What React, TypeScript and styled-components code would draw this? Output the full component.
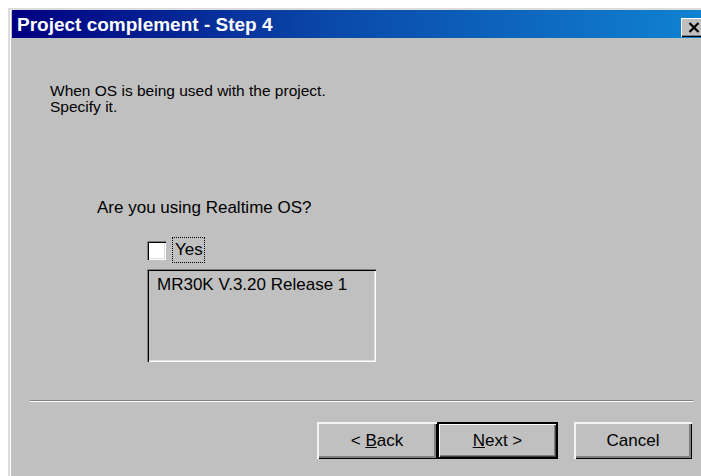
import React from "react";
import styled, { createGlobalStyle } from "styled-components";

const Global = createGlobalStyle`
  html, body {
    margin: 0;
    padding: 0;
    background: #ffffff;
    overflow: hidden;
  }
  body {
    width: 701px;
    height: 476px;
    font-family: "Liberation Sans", Arial, sans-serif;
  }
`;

const Window = styled.div`
  box-sizing: border-box;
  margin: 8px 0 0 8px;
  width: 703px;
  height: 480px;
  border-top: 2px solid #dcdcdc;
  border-left: 2px solid #dcdcdc;
  padding-left: 2px;
  background: #c0c0c0;
  box-shadow: inset 1px 1px #ffffff;
  display: flex;
  flex-direction: column;
`;

const TitleBar = styled.div`
  height: 28px;
  flex: 0 0 28px;
  display: flex;
  align-items: center;
  justify-content: space-between;
  padding: 0 4px 0 5px;
  background: linear-gradient(90deg, #000080 0%, #0a48a8 45%, #1084d0 100%);
`;

const TitleText = styled.span`
  color: #ffffff;
  font-weight: bold;
  font-size: 19px;
  padding-top: 2px;
`;

const CloseButton = styled.div`
  width: 26px;
  height: 19px;
  margin-top: 6px;
  background: #c0c0c0;
  box-sizing: border-box;
  display: flex;
  align-items: center;
  justify-content: center;
  box-shadow: inset 1px 1px #ffffff, inset -1px -1px #000000, inset -2px -2px #808080;
`;

const Content = styled.div`
  flex: 1;
  display: flex;
  flex-direction: column;
  align-items: flex-start;
  font-size: 17px;
  color: #000000;
`;

const Intro = styled.p`
  margin: 45px 0 0 38px;
  font-size: 15.5px;
  line-height: 16px;
`;

const Question = styled.p`
  margin: 83px 0 0 85px;
  line-height: 20px;
`;

const CheckRow = styled.div`
  margin: 19px 0 0 135px;
  height: 26px;
  display: flex;
  align-items: center;
  gap: 6px;
`;

const CheckBox = styled.span`
  box-sizing: border-box;
  width: 19px;
  height: 19px;
  background: #ffffff;
  box-shadow: inset 1px 1px #808080, inset 2px 2px #000000, inset -1px -1px #ffffff,
    inset -2px -2px #dfdfdf;
`;

const FocusLabel = styled.span`
  border: 1px dotted #000000;
  padding: 2px 1px 2px 2px;
  line-height: 20px;
`;

const ListBox = styled.div`
  box-sizing: border-box;
  margin: 6px 0 0 135px;
  width: 229px;
  height: 93px;
  padding: 6px 10px;
  line-height: 20px;
  background: #c0c0c0;
  box-shadow: inset 1px 1px #808080, inset 2px 2px #000000, inset -1px -1px #ffffff,
    inset -2px -2px #dfdfdf;
`;

const Separator = styled.hr`
  margin: 38px 0 0 18px;
  width: 663px;
  height: 0;
  border: none;
  border-top: 1px solid #808080;
  border-bottom: 1px solid #ffffff;
`;

const ButtonRow = styled.div`
  margin: 20px 0 0 305px;
  display: flex;
`;

const Button = styled.button<{ $primary?: boolean; $gap?: number; $width?: number }>`
  box-sizing: border-box;
  width: ${(p) => p.$width ?? 120}px;
  height: 37px;
  margin-left: ${(p) => p.$gap ?? 0}px;
  padding: 0;
  font-family: "Liberation Sans", Arial, sans-serif;
  font-size: 17px;
  color: #000000;
  background: #c0c0c0;
  border: ${(p) => (p.$primary ? "2px solid #000000" : "none")};
  box-shadow: ${(p) =>
    p.$primary
      ? "inset 1px 1px #ffffff, inset -1px -1px #404040, inset -2px -2px #808080"
      : "inset 2px 2px #f4f4f4, inset -1px -1px #000000, inset -3px -3px #808080"};
`;

const Key = styled.span`
  text-decoration: underline;
`;

export default function App() {
  return (
    <>
      <Global />
      <Window>
        <TitleBar>
          <TitleText>Project complement - Step 4</TitleText>
          <CloseButton>
            <svg width="12" height="11" viewBox="0 0 12 11">
              <path d="M1.5 1 L10.5 10 M10.5 1 L1.5 10" stroke="#000" strokeWidth="2.2" />
            </svg>
          </CloseButton>
        </TitleBar>
        <Content>
          <Intro>
            When OS is being used with the project.
            <br />
            Specify it.
          </Intro>
          <Question>Are you using Realtime OS?</Question>
          <CheckRow>
            <CheckBox />
            <FocusLabel>Yes</FocusLabel>
          </CheckRow>
          <ListBox>MR30K V.3.20 Release 1</ListBox>
          <Separator />
          <ButtonRow>
            <Button>
              &lt; <Key>B</Key>ack
            </Button>
            <Button $primary $width={121}>
              <Key>N</Key>ext &gt;
            </Button>
            <Button $gap={16} $width={118}>
              Cancel
            </Button>
          </ButtonRow>
        </Content>
      </Window>
    </>
  );
}
